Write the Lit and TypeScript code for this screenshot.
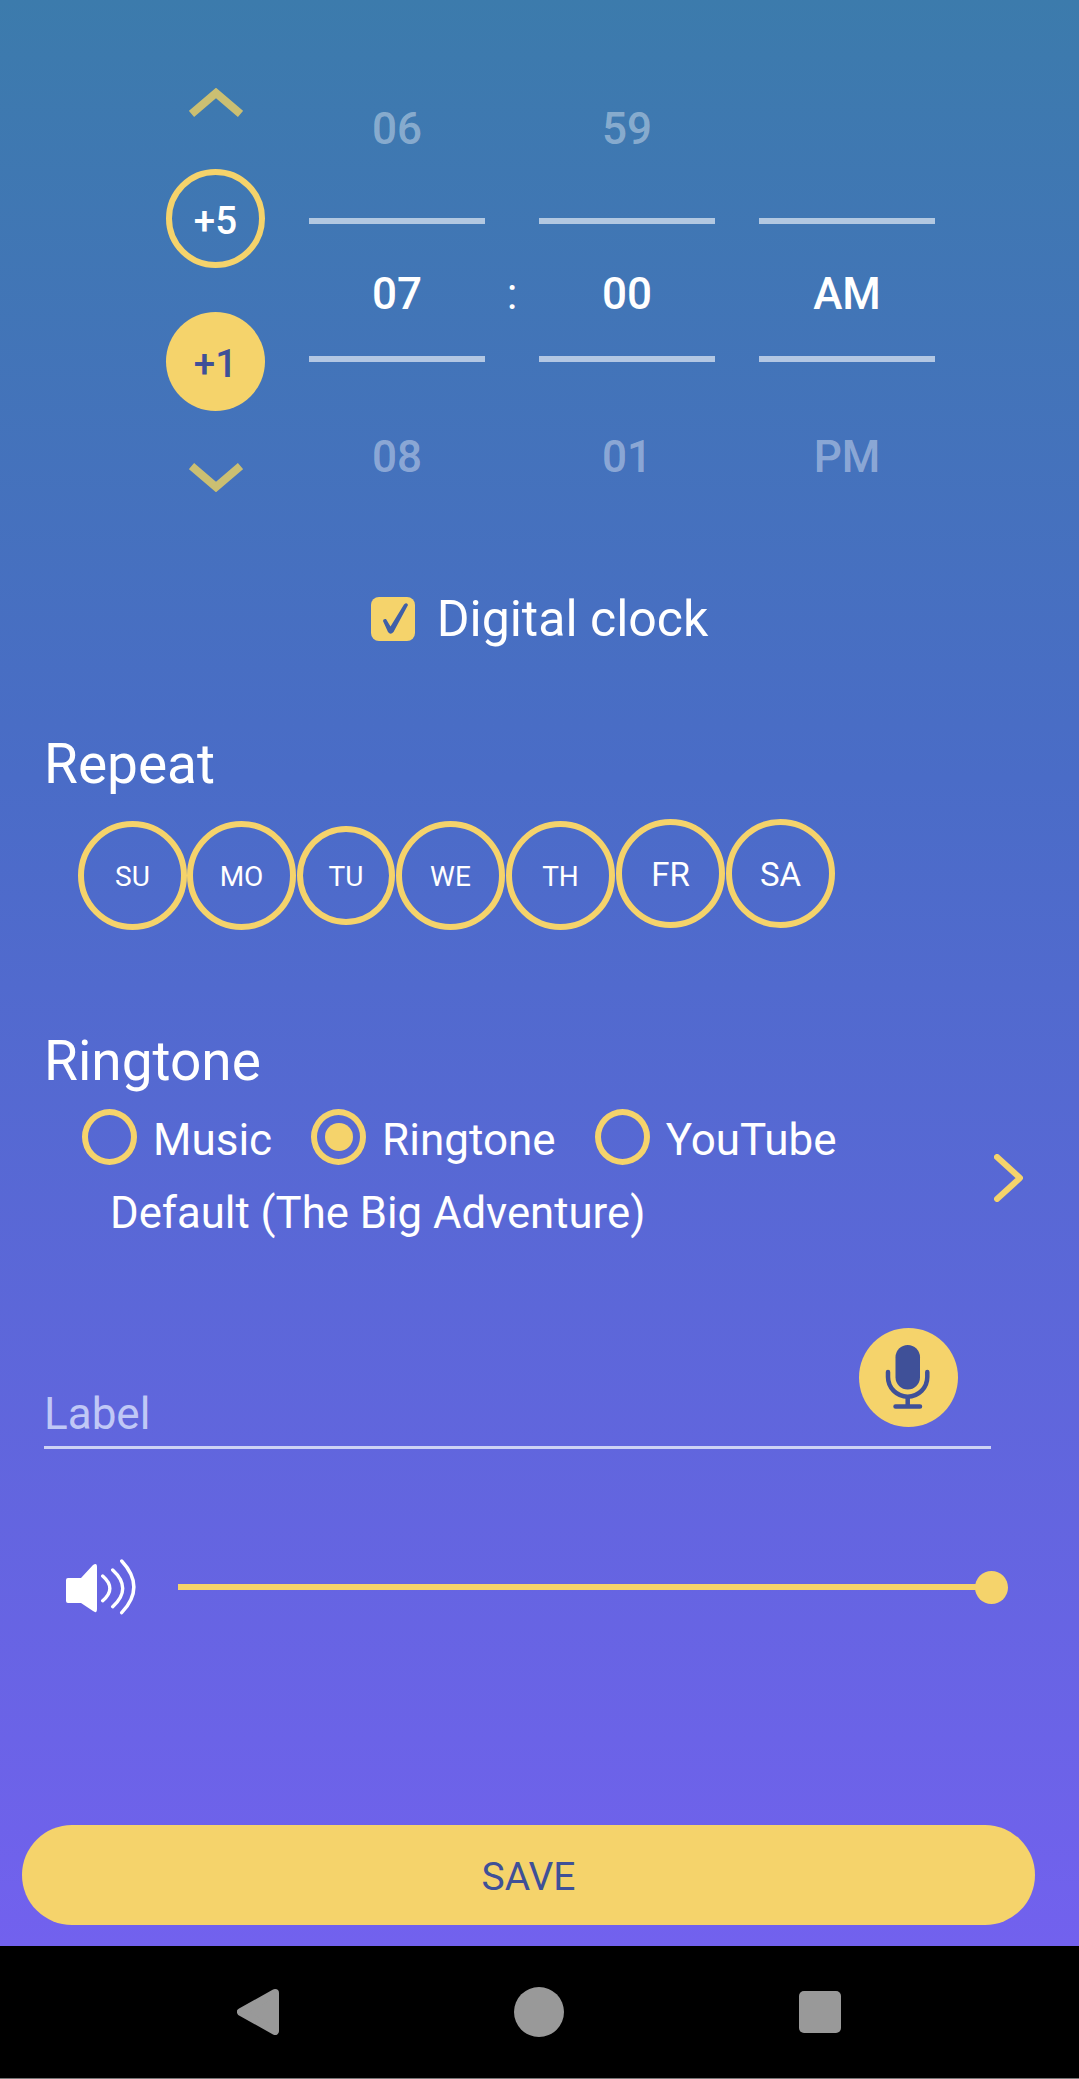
import { css, html, LitElement, svg } from 'lit';
import { customElement } from 'lit/decorators.js';
import { classMap } from 'lit/directives/class-map.js';

const WHEELS = [
  { prev: '06', current: '07', next: '08', sep: true },
  { prev: '59', current: '00', next: '01', sep: false },
  { prev: '\u00a0', current: 'AM', next: 'PM', sep: false },
];

const DAYS = [
  { name: 'SU', small: false, raised: false, tight: true },
  { name: 'MO', small: false, raised: false, tight: false },
  { name: 'TU', small: true, raised: false, tight: false },
  { name: 'WE', small: false, raised: false, tight: false },
  { name: 'TH', small: false, raised: false, tight: false },
  { name: 'FR', small: false, raised: true, tight: false },
  { name: 'SA', small: false, raised: true, tight: false },
];

const SOURCES = [
  { name: 'Music', checked: false },
  { name: 'Ringtone', checked: true },
  { name: 'YouTube', checked: false },
];

const micIcon = svg`
  <rect x="36.5" y="17" width="24.5" height="44.5" rx="12.25" fill="#3f5098" />
  <path d="M29 44v5a19.65 19.65 0 0 0 39.3 0v-5M48.7 69v9M36.5 78.5h24.5"
    fill="none" stroke="#3f5098" stroke-width="4.5" stroke-linecap="round" />
`;

const speakerIcon = svg`
  <path d="M2 19H15L27 6Q31 3 31 8V50Q31 55 27 52L15 44H2Q0 44 0 42V21Q0 19 2 19Z" fill="#fff" />
  <path d="M36.7 17Q51 29.5 36.7 41.7M46.7 11Q66.7 29.5 46.7 47.7M55.7 2Q80 28 55.7 53.7"
    fill="none" stroke="#fff" stroke-width="3.4" stroke-linecap="round" />
`;

@customElement('app-root')
export class AppRoot extends LitElement {
  static override styles = css`
    :host {
      display: flex;
      flex-direction: column;
      width: 1079px;
      height: 2079px;
      font-family: Roboto, sans-serif;
      color: #fff;
    }

    svg {
      display: block;
      flex: none;
    }

    .screen {
      height: 1946px;
      box-sizing: border-box;
      display: flex;
      flex-direction: column;
      padding-bottom: 21px;
      background: linear-gradient(180deg, #3c7bac 0%, #4a6cc7 40%, #7261ee 100%);
    }

    /* time picker */
    .picker {
      display: flex;
      padding: 88px 0 0 166px;
    }

    .steps {
      width: 99px;
      display: flex;
      flex-direction: column;
      align-items: center;
    }

    .arrow-up {
      margin-bottom: 51px;
    }

    .arrow-down {
      margin-top: 51px;
    }

    .step {
      width: 99px;
      height: 99px;
      box-sizing: border-box;
      border-radius: 50%;
      display: flex;
      align-items: center;
      justify-content: center;
      padding-top: 3px;
      font-size: 38.5px;
      font-weight: 500;
    }

    .step.outline {
      border: 6px solid #f5d36b;
      margin-bottom: 44px;
    }

    .step.filled {
      background: #f5d36b;
      color: #3f5098;
    }

    .wheels {
      display: flex;
      margin-left: 44px;
      padding-top: 11px;
      font-size: 44px;
      line-height: 60px;
      font-weight: 500;
    }

    .wheel {
      width: 176px;
      text-align: center;
    }

    .gap {
      width: 44px;
    }

    .colon {
      width: 54px;
      padding-top: 165px;
      text-align: center;
      font-weight: 400;
    }

    .faded {
      color: rgba(255, 255, 255, 0.4);
    }

    .prev {
      padding-bottom: 59px;
    }

    .current {
      padding: 40px 0 32px;
      border-top: 6px solid rgba(255, 255, 255, 0.6);
      border-bottom: 6px solid rgba(255, 255, 255, 0.6);
    }

    .next {
      padding-top: 65px;
    }

    /* digital clock toggle */
    .clock {
      margin-top: 105px;
      height: 44px;
      display: flex;
      align-items: center;
      justify-content: center;
      gap: 22px;
      font-size: 50px;
    }

    .checkbox {
      width: 44px;
      height: 44px;
      border-radius: 8px;
      background: #f5d36b;
    }

    h2 {
      margin: 0;
      padding-left: 44px;
      font-size: 55px;
      font-weight: 400;
      line-height: 64px;
    }

    .repeat {
      margin-top: 91px;
    }

    .days {
      margin-top: 23px;
      padding-left: 78px;
      display: flex;
      align-items: center;
      gap: 1px;
    }

    .day {
      width: 109px;
      height: 109px;
      box-sizing: border-box;
      border: 6px solid #f5d36b;
      border-radius: 50%;
      display: flex;
      align-items: center;
      justify-content: center;
      padding-top: 2px;
      font-size: 28px;
    }

    .day.small {
      width: 98px;
      height: 99px;
    }

    .day.tight {
      margin-right: -1px;
    }

    .day.raised {
      margin-bottom: 4px;
      font-size: 33px;
    }

    .ringtone {
      margin-top: 97px;
    }

    .tone {
      margin-top: 16px;
      display: flex;
      align-items: center;
      padding: 0 56px 0 82px;
    }

    .tone-main {
      flex: 1;
    }

    .sources {
      display: flex;
      gap: 39px;
      font-size: 44px;
      line-height: 50px;
    }

    .source {
      display: flex;
      align-items: center;
      gap: 16px;
    }

    .source span {
      padding-top: 5px;
    }

    .radio {
      width: 55px;
      height: 56px;
      box-sizing: border-box;
      border: 6px solid #f5d36b;
      border-radius: 50%;
      display: flex;
      align-items: center;
      justify-content: center;
    }

    .radio.checked::after {
      content: '';
      width: 28px;
      height: 28px;
      border-radius: 50%;
      background: #f5d36b;
    }

    .tone-name {
      margin: 18px 0 0 28px;
      font-size: 43.7px;
      line-height: 60px;
    }

    .tone-arrow {
      margin-top: 4px;
    }

    .label {
      margin: 85px 88px 0 44px;
      padding-right: 33px;
      display: flex;
      align-items: flex-end;
      justify-content: space-between;
      border-bottom: 3px solid #cdd2f4;
    }

    .label-text {
      margin-bottom: 6px;
      font-size: 44px;
      line-height: 52px;
      color: #c0c8f6;
    }

    .mic {
      width: 99px;
      height: 99px;
      margin-bottom: 19px;
      border-radius: 50%;
      background: #f5d36b;
    }

    .volume {
      margin-top: 110px;
      padding: 0 71px 0 66px;
      display: flex;
      align-items: center;
      gap: 42px;
    }

    .slider {
      flex: 1;
      display: flex;
      align-items: center;
    }

    .track {
      flex: 1;
      height: 6px;
      background: #f5d36b;
    }

    .thumb {
      width: 33px;
      height: 33px;
      margin-left: -15px;
      border-radius: 50%;
      background: #f5d36b;
    }

    .save {
      margin: auto 44px 0 22px;
      height: 100px;
      border: none;
      border-radius: 50px;
      background: #f5d36b;
      color: #3f5098;
      font-family: inherit;
      font-size: 39px;
      padding: 3px 0 0;
    }

    /* android nav bar */
    .nav {
      flex: 1;
      display: flex;
      align-items: center;
      padding-left: 237px;
      gap: 235px;
      background: #000;
      border-bottom: 1px solid #777;
    }

    .home {
      width: 50px;
      height: 50px;
      border-radius: 50%;
      background: #999;
    }

    .recent {
      width: 42px;
      height: 42px;
      border-radius: 5px;
      background: #999;
    }
  `;

  private renderWheel(wheel: (typeof WHEELS)[number]) {
    return html`
      <div class="wheel">
        <div class="prev faded">${wheel.prev}</div>
        <div class="current">${wheel.current}</div>
        <div class="next faded">${wheel.next}</div>
      </div>
      ${wheel.sep ? html`<div class="colon">:</div>` : html`<div class="gap"></div>`}
    `;
  }

  override render() {
    return html`
      <div class="screen">
        <div class="picker">
          <div class="steps">
            <svg class="arrow-up" width="54" height="30" viewBox="0 0 54 30">
              <path d="M2.5 26L27 5L51.5 26" fill="none" stroke="#cbbf72" stroke-width="8" />
            </svg>
            <div class="step outline">+5</div>
            <div class="step filled">+1</div>
            <svg class="arrow-down" width="54" height="30" viewBox="0 0 54 30">
              <path d="M2.5 4L27 25L51.5 4" fill="none" stroke="#cbbf72" stroke-width="8" />
            </svg>
          </div>
          <div class="wheels">${WHEELS.map((w) => this.renderWheel(w))}</div>
        </div>

        <div class="clock">
          <div class="checkbox">
            <svg width="44" height="44" viewBox="0 0 44 44">
              <path d="M12 24Q12 21.5 15 22L19.5 29.5L33 7.5Q36 5 37 8L22.5 35Q19.5 38.5 17 35Z" fill="#3f5fa8" />
            </svg>
          </div>
          <span>Digital clock</span>
        </div>

        <h2 class="repeat">Repeat</h2>
        <div class="days">
          ${DAYS.map(
            (d) => html`<div class=${classMap({ day: true, small: d.small, raised: d.raised, tight: d.tight })}>${d.name}</div>`
          )}
        </div>

        <h2 class="ringtone">Ringtone</h2>
        <div class="tone">
          <div class="tone-main">
            <div class="sources">
              ${SOURCES.map(
                (s) => html`
                  <div class="source">
                    <div class=${classMap({ radio: true, checked: s.checked })}></div>
                    <span>${s.name}</span>
                  </div>
                `
              )}
            </div>
            <div class="tone-name">Default (The Big Adventure)</div>
          </div>
          <svg class="tone-arrow" width="29" height="48" viewBox="0 0 29 48">
            <path d="M3 3L26 24L3 45" fill="none" stroke="#f5d36b" stroke-width="6"
              stroke-linecap="round" stroke-linejoin="round" />
          </svg>
        </div>

        <div class="label">
          <span class="label-text">Label</span>
          <div class="mic">
            <svg width="99" height="99" viewBox="0 0 99 99">${micIcon}</svg>
          </div>
        </div>

        <div class="volume">
          <svg width="70" height="56" viewBox="0 0 70 56">${speakerIcon}</svg>
          <div class="slider">
            <div class="track"></div>
            <div class="thumb"></div>
          </div>
        </div>

        <button class="save">SAVE</button>
      </div>

      <div class="nav">
        <svg width="42" height="46" viewBox="0 0 42 46">
          <path d="M38 4L4 23L38 42Z" fill="#999" stroke="#999" stroke-width="8" stroke-linejoin="round" />
        </svg>
        <div class="home"></div>
        <div class="recent"></div>
      </div>
    `;
  }
}

declare global {
  interface HTMLElementTagNameMap {
    'app-root': AppRoot;
  }
}
